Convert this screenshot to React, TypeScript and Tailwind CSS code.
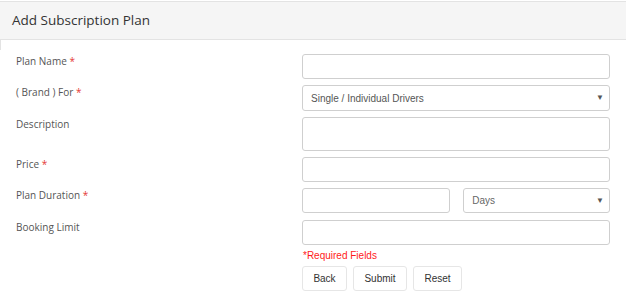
export default function App() {
  const label = "pl-4 pt-[1px] text-[10px] leading-[13px] text-[#555]";
  const box =
    "w-full rounded-[3px] border border-[#cfcfcf] bg-white px-2 text-[10px] text-[#555] font-['Liberation_Sans',Arial,sans-serif] outline-none";
  const btn =
    "h-[25px] rounded-[3px] border border-[#e6e6e6] bg-white text-[10px] text-[#333] font-['Liberation_Sans',Arial,sans-serif]";

  return (
    <div className="h-[308px] w-[626px] bg-white font-['Open_Sans',sans-serif]">
      {/* header */}
      <div className="mt-px flex h-[39px] items-center border-y border-[#e3e3e3] bg-[#f5f5f5] px-3">
        <h1 className="text-[13.5px] text-[#333]">Add Subscription Plan</h1>
      </div>

      <div className="relative pt-[14px] before:absolute before:left-0 before:top-0 before:h-[10px] before:w-px before:bg-[#e3e3e3]">
        <div className="grid grid-cols-[302px_308px] gap-y-[6px]">
          <label className={label}>
            Plan Name <span className="text-[#e53935]">*</span>
          </label>
          <input className={`${box} h-[25px]`} />

          <label className={label}>
            ( Brand ) For <span className="text-[#e53935]">*</span>
          </label>
          <div className={`${box} flex h-[26px] items-center justify-between pr-[5px]`}>
            <span>Single / Individual Drivers</span>
            <span className="text-[8px] text-[#555]">▼</span>
          </div>

          <label className={label}>Description</label>
          <textarea className={`${box} h-[34px] resize-none py-1`} />

          <label className={label}>
            Price <span className="text-[#e53935]">*</span>
          </label>
          <input className={`${box} h-[25px]`} />

          <label className={label}>
            Plan Duration <span className="text-[#e53935]">*</span>
          </label>
          <div className="flex h-[25px] gap-[13px]">
            <input className={`${box} h-[25px] w-[147px]`} />
            <div className={`${box} flex h-[25px] w-[148px] items-center justify-between pr-[5px]`}>
              <span className="text-[#666]">Days</span>
              <span className="text-[8px] text-[#555]">▼</span>
            </div>
          </div>

          <label className={`${label} mt-px`}>Booking Limit</label>
          <input className={`${box} mt-px h-[25px]`} />

          <div />
          <div>
            <p className="mt-[-1px] pl-px text-[10px] leading-[12px] text-[#ff1a1a] font-['Liberation_Sans',Arial,sans-serif]">
              *Required Fields
            </p>
            <div className="mt-[4px] flex gap-[6px]">
              <button className={`${btn} w-[45px]`}>Back</button>
              <button className={`${btn} w-[54px]`}>Submit</button>
              <button className={`${btn} w-[49px]`}>Reset</button>
            </div>
          </div>
        </div>
      </div>
    </div>
  );
}
